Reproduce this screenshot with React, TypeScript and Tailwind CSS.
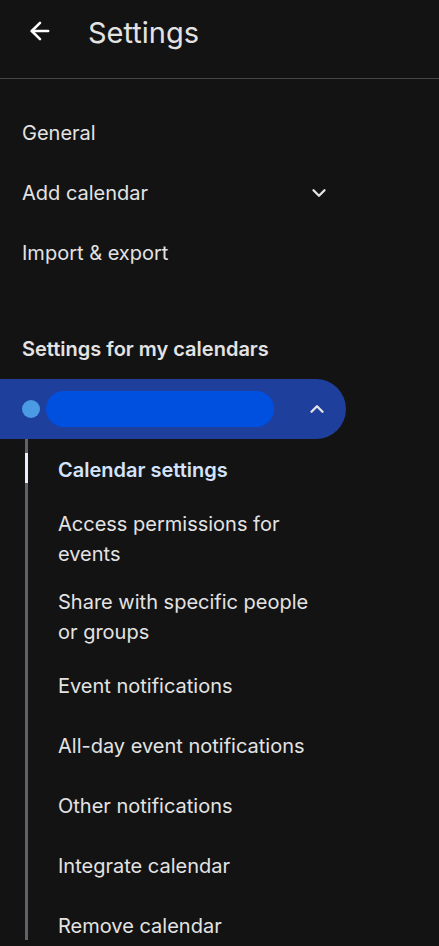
import { ArrowLeft, ChevronDown, ChevronUp } from 'lucide-react'

const TOP_ITEMS = [
  { label: 'General' },
  { label: 'Add calendar', chevron: true },
  { label: 'Import & export' },
]

const SUB_ITEMS: { label: string; lines?: string[] }[] = [
  { label: 'Access permissions for events', lines: ['Access permissions for', 'events'] },
  { label: 'Share with specific people or groups', lines: ['Share with specific people', 'or groups'] },
  { label: 'Event notifications' },
  { label: 'All-day event notifications' },
  { label: 'Other notifications' },
  { label: 'Integrate calendar' },
]

export default function App() {
  return (
    <div
      className="w-[439px] h-[946px] overflow-hidden bg-[#131313] text-[#e3e3e3]"
      style={{ fontFamily: 'Inter, Roboto, "Noto Sans", sans-serif' }}
    >
      {/* Header */}
      <div className="h-[79px] flex items-center border-b border-[#444746] pb-[14px]">
        <ArrowLeft className="ml-[26px] w-[28px] h-[28px] text-white -mt-[3px]" strokeWidth={2.2} />
        <span className="ml-[34px] text-[29px] leading-none text-[#e3e3e3]">Settings</span>
      </div>

      {/* Top level nav */}
      <div className="pt-[24px]">
        {TOP_ITEMS.map(item => (
          <div key={item.label} className="h-[60px] flex items-center pl-[22px] pr-[109px]">
            <span className="text-[20px] flex-1">{item.label}</span>
            {item.chevron && <ChevronDown className="w-[22px] h-[22px] text-[#e3e3e3] -mt-[1px]" strokeWidth={2.6} />}
          </div>
        ))}
      </div>

      {/* My calendars */}
      <div className="h-[60px] mt-[36px] flex items-center pl-[22px]">
        <span className="text-[20px] font-semibold">Settings for my calendars</span>
      </div>

      <div className="w-[346px] h-[60px] bg-[#1f3f9d] rounded-r-full flex items-center pl-[22px] pr-[16px]">
        <div className="w-[18px] h-[18px] rounded-full bg-[#4a9be3]" />
        <div className="ml-[6px] w-[228px] h-[36px] rounded-full bg-[#0050e0]" />
        <div className="flex-1" />
        <ChevronUp className="w-[22px] h-[22px] text-[#e3e3e3] mr-[2px]" strokeWidth={2.6} />
      </div>

      {/* Sub nav with rail */}
      <div className="ml-[25px] border-l-[3px] border-[#5f6368] relative pt-[1px]">
        <div className="absolute -left-[3px] top-[14px] w-[3px] h-[30px] bg-[#e8eefc]" />
        <div className="h-[60px] flex items-center pl-[30px]">
          <span className="text-[20px] font-semibold text-[#d3e3fd]">Calendar settings</span>
        </div>
        {SUB_ITEMS.map(item =>
          item.lines ? (
            <div key={item.label} className="py-[9px] pl-[30px] text-[20px] leading-[30px]">
              {item.lines.map(l => (
                <div key={l}>{l}</div>
              ))}
            </div>
          ) : (
            <div key={item.label} className="h-[60px] flex items-center pl-[30px]">
              <span className="text-[20px]">{item.label}</span>
            </div>
          )
        )}
        <div className="h-[44px] pt-[15px] pl-[30px] text-[20px] leading-[30px]">Remove calendar</div>
      </div>
    </div>
  )
}
